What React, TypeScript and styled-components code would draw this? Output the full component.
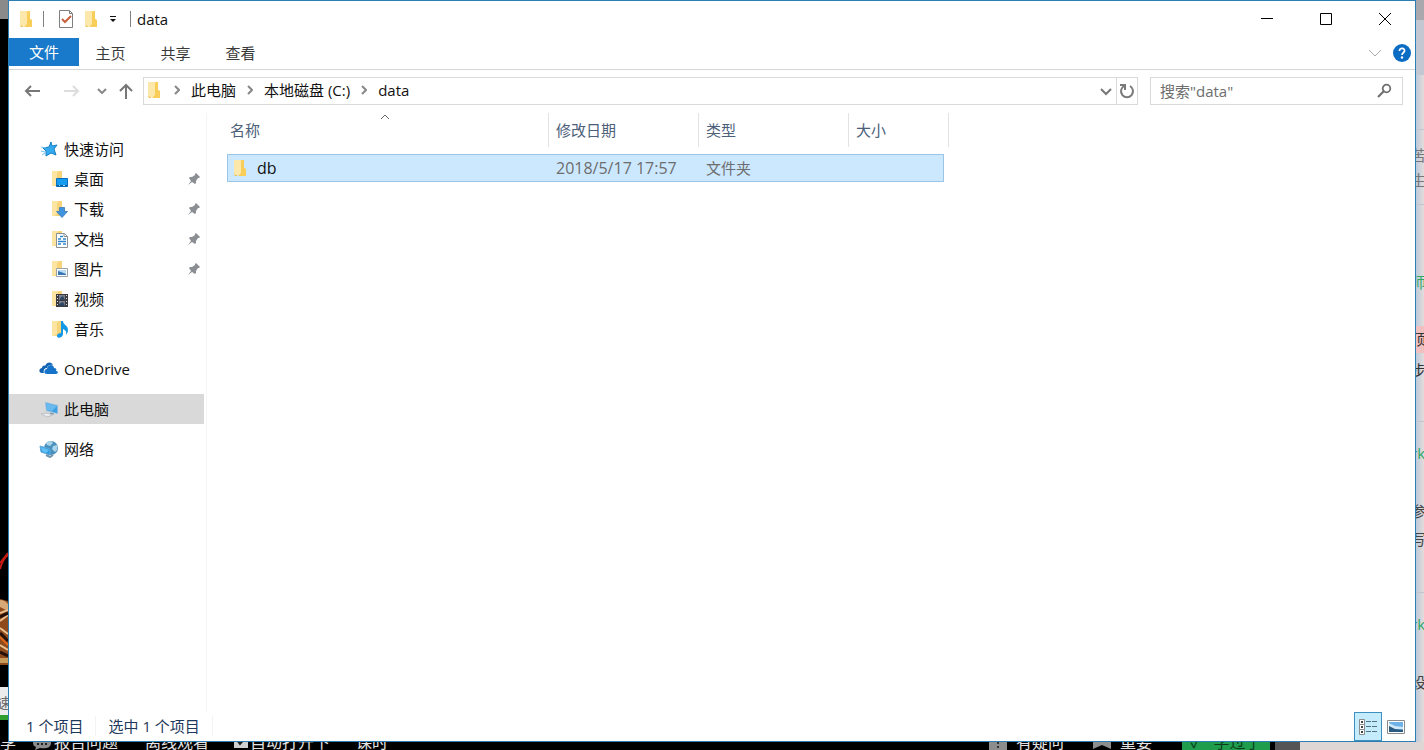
import React from "react";
import styled, { createGlobalStyle } from "styled-components";

const GlobalStyle = createGlobalStyle`
  * { box-sizing: border-box; }
  body {
    margin: 0;
    overflow: hidden;
    font: 15px/20px "Open Sans", "Noto Sans CJK SC", sans-serif;
    color: #111;
  }
  button, input { font: inherit; color: inherit; }
  svg { display: block; flex: none; }
`;

/* ---------- Desktop behind the window ---------- */

const Desktop = styled.div`
  display: grid;
  grid-template: minmax(0, 1fr) 8px / 8px minmax(0, 1fr) 8px;
  height: 100vh;
  min-height: 500px;
  background: #000;
`;

const LeftEdge = styled.div`
  display: flex;
  flex-direction: column;
  overflow: hidden;
`;

const LeftTop = styled.div`
  height: 19px;
  background: #8a8a8a;
`;

const Artwork = styled.div`
  flex: 1;
  display: flex;
  align-items: flex-end;
  padding-bottom: 20px;
`;

const SpeedLabel = styled.div`
  height: 28px;
  background: #ececec;
  color: #666;
  font-size: 14px;
  line-height: 32px;
  text-indent: -3px;
  overflow: hidden;
  white-space: nowrap;
`;

const Progress = styled.div`
  height: 5px;
  margin-bottom: 22px;
  background: #2f9e2f;
`;

const RightEdge = styled.div`
  overflow: hidden;
  background: linear-gradient(90deg, #bccada, #e4dcdb);
`;

const Slice = styled.div<{ $h: number; $color?: string; $bg?: string; $line?: boolean }>`
  height: ${(p) => p.$h}px;
  line-height: ${(p) => p.$h}px;
  color: ${(p) => p.$color || "#777"};
  background: ${(p) => p.$bg || "transparent"};
  border-bottom: ${(p) => (p.$line ? "1px solid #c3c5cc" : "0")};
  font-size: 15px;
  text-indent: -5px;
  white-space: nowrap;
  overflow: hidden;
`;

const BottomEdge = styled.div`
  grid-column: 1 / -1;
  display: flex;
  align-items: flex-end;
  overflow: hidden;
  color: #e4e4e4;
  font-size: 16px;
  line-height: 16px;
  white-space: nowrap;
`;

const BottomItem = styled.span<{ $w: number }>`
  display: flex;
  align-items: flex-end;
  gap: 2px;
  width: ${(p) => p.$w}px;
`;

const Learned = styled.span`
  display: flex;
  align-items: flex-end;
  justify-content: center;
  gap: 12px;
  width: 88px;
  height: 8px;
  background: #1f9d4c;
  color: #0b3d1c;
`;

const Grow = styled.span`
  flex: 1;
`;

const Block = styled.span<{ $w: number; $bg: string }>`
  width: ${(p) => p.$w}px;
  height: 8px;
  background: ${(p) => p.$bg};
`;

/* ---------- Explorer window ---------- */

const Window = styled.main`
  display: flex;
  flex-direction: column;
  min-width: 0;
  background: #fff;
  border: 1px solid #2b7fb5;
`;

const TitleBar = styled.header`
  display: flex;
  align-items: center;
  height: 37px;
  padding: 0 1px 1px 10px;
`;

const QuickTools = styled.div`
  display: flex;
  align-items: center;
`;

const ToolButton = styled.button<{ $w: number }>`
  display: flex;
  align-items: center;
  justify-content: center;
  width: ${(p) => p.$w}px;
  height: 28px;
  padding: 0;
  border: 0;
  background: none;
`;

const Bar = styled.span`
  width: 1px;
  height: 16px;
  margin: 0 8px;
  background: #808080;
`;

const Title = styled.h1`
  flex: 1;
  margin: 0 0 0 -2px;
  font-size: 15px;
  font-weight: 400;
`;

const CaptionButton = styled(ToolButton)`
  height: 36px;
`;

const Ribbon = styled.div`
  display: flex;
  align-items: flex-start;
  height: 32px;
  border-bottom: 1px solid #d5d6d8;
`;

const Tab = styled.button<{ $active?: boolean }>`
  width: ${(p) => (p.$active ? 70 : 65)}px;
  height: ${(p) => (p.$active ? 28 : 30)}px;
  padding: 0 ${(p) => (p.$active ? 0 : 2)}px 0 0;
  border: 0;
  color: ${(p) => (p.$active ? "#fff" : "#3a3a3a")};
  background: ${(p) => (p.$active ? "#1979ca" : "none")};
`;

const RibbonEnd = styled.div`
  display: flex;
  align-items: center;
  height: 30px;
  margin-left: auto;
  padding-right: 2px;
`;

const AddressRow = styled.div`
  display: flex;
  align-items: center;
  height: 43px;
  padding: 0 12px 2px 7px;
`;

const AddressBar = styled.div`
  display: flex;
  align-items: stretch;
  flex: 1;
  min-width: 0;
  height: 28px;
  margin-right: 12px;
  border: 1px solid #d9d9d9;
`;

const Crumbs = styled.nav`
  display: flex;
  align-items: center;
  flex: 1;
  padding: 0 0 2px 3px;
  white-space: nowrap;
`;

const Crumb = styled.a`
  color: #111;
  text-decoration: none;
`;

const Separator = styled.span`
  display: flex;
  justify-content: center;
  width: 28px;
`;

const Refresh = styled(ToolButton)`
  height: auto;
  border-left: 1px solid #d9d9d9;
`;

const SearchBox = styled.label`
  display: flex;
  align-items: center;
  width: 253px;
  height: 28px;
  padding: 0 10px 0 9px;
  border: 1px solid #d9d9d9;
`;

const SearchInput = styled.input`
  flex: 1;
  min-width: 0;
  padding: 0;
  border: 0;
  outline: 0;
  background: none;
  &::placeholder { color: #6d6d6d; opacity: 1; }
`;

const Body = styled.div`
  display: flex;
  flex: 1;
  min-height: 0;
`;

const Sidebar = styled.nav`
  display: flex;
  flex-direction: column;
  gap: 10px;
  width: 198px;
  padding: 21px 2px 0 0;
  border-right: 1px solid #f5f5f5;
`;

const Group = styled.ul`
  margin: 0;
  padding: 0;
  list-style: none;
`;

const NavLink = styled.a<{ $child?: boolean; $selected?: boolean }>`
  display: flex;
  align-items: center;
  gap: 5px;
  height: 30px;
  padding: 0 3px 0 ${(p) => (p.$child ? 42 : 30)}px;
  color: #111;
  background: ${(p) => (p.$selected ? "#d9d9d9" : "none")};
  text-decoration: none;
`;

const NavText = styled.span`
  flex: 1;
`;

const Files = styled.section`
  flex: 1;
  min-width: 0;
  padding-left: 20px;
  overflow: hidden;
`;

const FileTable = styled.table`
  width: 722px;
  table-layout: fixed;
  border-collapse: separate;
  border-spacing: 0;
`;

const NameCol = styled.col`
  width: 322px;
`;

const MidCol = styled.col`
  width: 150px;
`;

const SizeCol = styled.col`
  width: 95px;
`;

const HeadCell = styled.th`
  position: relative;
  height: 34px;
  padding: 0 0 0 7px;
  border-right: 1px solid #e3e3e3;
  color: #4c607a;
  font-weight: 400;
  text-align: left;
  &:first-child { padding-left: 3px; }
`;

const SortMark = styled.span`
  position: absolute;
  top: 1px;
  left: 153px;
`;

const Spacer = styled.td`
  height: 7px;
  padding: 0;
`;

const Cell = styled.td`
  height: 28px;
  padding: 0 0 0 7px;
  border: solid #99c6e8;
  border-width: 1px 0;
  background: #cce8ff;
  color: #6d6d6d;
  &:first-child { padding-left: 5px; border-left-width: 1px; color: #111; }
  &:last-child { border-right-width: 1px; }
`;

const Latin = styled.span`
  font-size: 16px;
`;

const FileName = styled.span`
  display: flex;
  align-items: center;
  gap: 8px;
`;

const StatusBar = styled.footer`
  display: flex;
  align-items: flex-start;
  height: 29px;
  padding: 0 5px 0 17px;
  color: #1e395b;
`;

const StatusText = styled.span`
  margin: 4px 12px 0 0;
  padding-right: 12px;
  border-right: 1px solid #f3f3f3;
`;

const ViewButton = styled.button<{ $on?: boolean }>`
  display: flex;
  align-items: center;
  justify-content: center;
  width: 28px;
  height: 29px;
  padding: 0;
  border: 1px solid ${(p) => (p.$on ? "#3c8fbf" : "transparent")};
  background: ${(p) => (p.$on ? "#c4ecfc" : "none")};
`;

const ViewButtons = styled.div`
  display: flex;
  margin-left: auto;
`;

/* ---------- Icons ---------- */

const Folder = () => (
  <svg width="16" height="18" viewBox="0 0 16 18">
    <path d="M1 1h10v8l2 1v6H1z" fill="#fbdf8c" />
    <path d="M1 1h6l1 3v12H1z" fill="#fde8ab" />
    <path d="M8 4l1-3h2v8l2 1v7H5l3-3z" fill="#f8cd58" />
    <path d="M1 15l4 2H2z" fill="#efbd4d" />
  </svg>
);

const FolderBase = () => (
  <>
    <path d="M1 1h9v15H1z" fill="#fce4a3" />
    <path d="M6 3l2-2h3v15H3l3-2z" fill="#f7d47a" />
  </>
);

const Desk = () => (
  <svg width="18" height="18" viewBox="0 0 18 18">
    <FolderBase />
    <path d="M5.500 8.500h11v8h-11z" fill="#149cf0" stroke="#0d6dbd" />
    <path d="M6 15.500h10" stroke="#075a9c" />
    <path d="M8 15.500h1M12 15.500h2" stroke="#9edbff" />
  </svg>
);

const Download = () => (
  <svg width="18" height="18" viewBox="0 0 18 18">
    <FolderBase />
    <path d="M8.500 7.500h5v4h3l-5.500 6-5.500-6h3z" fill="#3f94e0" stroke="#4b86bd" />
  </svg>
);

const Documents = () => (
  <svg width="18" height="18" viewBox="0 0 18 18">
    <FolderBase />
    <path d="M5.500 3.500h8l3 3v11h-11z" fill="#fff" stroke="#8a8f96" />
    <path d="M13 3.500v3h3.500" fill="none" stroke="#8a8f96" />
    <path d="M9 6.500h3M7 9h3M12 9h3M7 11.500h8M7 14h3M12 14h3" stroke="#2f86cc" strokeWidth="1.400" />
  </svg>
);

const Pictures = () => (
  <svg width="18" height="18" viewBox="0 0 18 18">
    <FolderBase />
    <path d="M5.500 8.500h11v8h-11z" fill="#fff" stroke="#9aa1a8" />
    <path d="M7 10h8v5H7z" fill="#b9dcf6" />
    <path d="M7 11l3 1 5 2v1H7z" fill="#3878b4" />
  </svg>
);

const Videos = () => (
  <svg width="18" height="18" viewBox="0 0 18 18">
    <FolderBase />
    <path d="M5 4h12v13H5z" fill="#3b3b40" />
    <path d="M8 5h6v5H8zM8 11h6v5H8z" fill="#78808f" />
    <path d="M9 8l3-2 2 4H9zM8 14l4-2 2 4H8z" fill="#2e4561" />
    <path d="M6.500 5v12M15.500 5v12" stroke="#ddd" strokeDasharray="1 2" />
  </svg>
);

const Music = () => (
  <svg width="18" height="18" viewBox="0 0 18 18">
    <FolderBase />
    <path d="M10 1h2c0 4 5 4 5 9 0 2-1 4-2 5 1-4-1-5-3-6v5c0 4-6 5-6 2 0-2 2-3 4-3z" fill="#1599e5" />
  </svg>
);

const Star = () => (
  <svg width="20" height="18" viewBox="0 0 20 18">
    <path d="M12 2l1 4 5-1-3 4 2 6-5-2-5 3v-5L4 8l6-1z" fill="#34a9ee" stroke="#1680c4" />
    <path d="M2 7l5 1M2 11l4 1M3 15l3-2" stroke="#6fc3f3" />
  </svg>
);

const Cloud = () => (
  <svg width="20" height="16" viewBox="0 0 20 16">
    <path d="M3 12c-4 0-3-5 0-5 0-2 2-3 3-2 2-5 7-4 8-1-3-1-6 1-6 3-3 0-4 3-3 5z" fill="#1264b3" />
    <path d="M8 13c-4 0-3-5 0-5 0-5 7-5 7-1 2 0 3 1 2 3 3 0 2 3 0 3z" fill="#1673c9" />
  </svg>
);

const Computer = () => (
  <svg width="20" height="18" viewBox="0 0 20 18">
    <path d="M6 2l13 3v9L7 11z" fill="#8cbce0" />
    <path d="M7 3l11 3v7L8 10z" fill="#3ba0e4" />
    <path d="M7 3l11 3-5 5-5-1z" fill="#6ab9ee" />
    <path d="M2 14l6-1 6 2-6 2z" fill="#e9ecee" stroke="#bcc1c5" />
    <path d="M11 13l4 1" stroke="#6e8ea7" />
  </svg>
);

const Network = () => (
  <svg width="20" height="18" viewBox="0 0 20 18">
    <circle cx="12" cy="8" r="7" fill="#4a90bd" />
    <path d="M7 3c3-3 6-2 7 0l-3 3-3-1zM14 6l4-1c1 3 0 6-2 7l-3-3z" fill="#a9d4ea" />
    <path d="M1 6l10 3v6L2 12z" fill="#2b9be2" stroke="#5fa8d6" />
    <path d="M2 7l8 3-3 3-4-2z" fill="#64bff2" />
    <path d="M7 15l4 2 3-2" fill="none" stroke="#7295ab" strokeWidth="2" />
  </svg>
);

const Pin = () => (
  <svg width="14" height="14" viewBox="0 0 14 14">
    <path d="M9 1l4 4-1 1h-1L9 9v2l-1 1-3-2-4 3 3-4-2-3 1-1h2l3-2V2z" fill="#8b8f93" />
  </svg>
);

const Checklist = () => (
  <svg width="16" height="18" viewBox="0 0 16 18">
    <path d="M1.500.5h10l3 3v14h-13z" fill="#fff" stroke="#7f7f7f" />
    <path d="M11.500.5v3h3" fill="none" stroke="#7f7f7f" />
    <path d="M4 9l3 3 6-6" fill="none" stroke="#c9603c" strokeWidth="2" />
  </svg>
);

const Customize = () => (
  <svg width="8" height="8" viewBox="0 0 8 8">
    <path d="M1 1.500h6" stroke="#111" />
    <path d="M1 4h6L4 7z" fill="#111" />
  </svg>
);

const Stroke = ({ d, w, h, color = "#666", width = 2 }: { d: string; w: number; h: number; color?: string; width?: number }) => (
  <svg width={w} height={h} viewBox={`0 0 ${w} ${h}`}>
    <path d={d} fill="none" stroke={color} strokeWidth={width} />
  </svg>
);

const Chevron = () => <Stroke w={6} h={10} d="M1 1l4 4-4 4" color="#888" />;

const RefreshIcon = () => (
  <svg width="16" height="16" viewBox="0 0 16 16">
    <path d="M11 3a6 6 0 1 1-6 0" fill="none" stroke="#7a7a7a" strokeWidth="2" />
    <path d="M1 2h5v5" fill="none" stroke="#7a7a7a" strokeWidth="2" />
  </svg>
);

const SearchIcon = () => (
  <svg width="15" height="15" viewBox="0 0 15 15">
    <circle cx="9.500" cy="5.500" r="3.800" fill="none" stroke="#707070" strokeWidth="1.800" />
    <path d="M7 8l-6 6" stroke="#707070" strokeWidth="2.200" />
  </svg>
);

const Help = () => (
  <svg width="20" height="20" viewBox="0 0 20 20">
    <circle cx="10" cy="10" r="9" fill="#0b6cc4" />
    <path d="M7.500 8c0-4 5.500-3 5 0-.3 1.500-2.500 2-2.500 4" fill="none" stroke="#fff" strokeWidth="1.800" />
    <circle cx="10" cy="14.500" r="1.200" fill="#fff" />
  </svg>
);

const DetailsIcon = () => (
  <svg width="20" height="18" viewBox="0 0 20 18">
    {[1, 6, 11].map((y) => (
      <g key={y}>
        <path d={`M1.500 ${y}.5h5v5h-5z`} fill="#fff" stroke="#8a8a8a" />
        <path d={`M3 ${y + 2}h2v2H3z`} fill="#444" />
        <path d={`M8 ${y + 2}.5h5M14 ${y + 2}.5h5`} stroke="#55717f" />
      </g>
    ))}
  </svg>
);

const LargeIcon = () => (
  <svg width="18" height="14" viewBox="0 0 18 14">
    <path d="M.5.5h17v13H.5z" fill="#fff" stroke="#8a8a8a" />
    <path d="M2 2h14v10H2z" fill="#6db1e6" />
    <path d="M2 3l6 3 8 1v2H2z" fill="#cfe7f6" />
    <path d="M2 6l6 3 8 1v2H2z" fill="#2a5a80" />
  </svg>
);

const Books = () => (
  <svg width="8" height="116" viewBox="0 0 8 116">
    <path d="M0 18C2 10 5 6 8 4M0 12L8 2" fill="none" stroke="#c61b12" strokeWidth="2" />
    <path d="M0 48l8 2v64H0z" fill="#8f4a1c" />
    <path d="M0 49c4 0 6 2 8 4v7L0 56z" fill="#d9a877" />
    <path d="M0 62l8-3M0 70l8-6M0 77l8 6M0 94l8 5" stroke="#eac08c" strokeWidth="2" />
    <path d="M0 66l8-4M0 82l8 8M0 101l8 4" stroke="#241008" strokeWidth="3" />
    <path d="M0 86l8 8" stroke="#e0661a" strokeWidth="2" />
    <path d="M0 107h8v5H0z" fill="#c89a5b" />
  </svg>
);

const Bubble = () => (
  <svg width="20" height="14" viewBox="0 0 20 14">
    <path d="M1 7c0-8 18-8 18 0 0 5-6 6-11 5l-5 2 1-3C2 10 1 9 1 7z" fill="#8c8c8c" />
    <path d="M5 8h2M9 8h2M13 8h2" stroke="#222" strokeWidth="2" />
  </svg>
);

const Tick = () => (
  <svg width="14" height="14" viewBox="0 0 14 14">
    <path d="M0 0h14v12H0z" fill="#d0d0d0" />
    <path d="M3 4l3 4 6-7" fill="none" stroke="#222" strokeWidth="2" />
  </svg>
);

const Mark = ({ notch }: { notch?: boolean }) => (
  <svg width="18" height="10" viewBox="0 0 18 10">
    <path d={notch ? "M0 0h18v9l-9-4-9 4z" : "M0 0h18v10H0z"} fill="#8d8d8d" />
    {!notch && <path d="M9 1v3M9 6v2" stroke="#333" strokeWidth="2" />}
  </svg>
);

/* ---------- Content ---------- */

const quickLinks = [
  { text: "桌面", icon: <Desk />, pinned: true },
  { text: "下载", icon: <Download />, pinned: true },
  { text: "文档", icon: <Documents />, pinned: true },
  { text: "图片", icon: <Pictures />, pinned: true },
  { text: "视频", icon: <Videos />, pinned: false },
  { text: "音乐", icon: <Music />, pinned: false },
];

const roots = [
  { text: "OneDrive", icon: <Cloud />, selected: false },
  { text: "此电脑", icon: <Computer />, selected: true },
  { text: "网络", icon: <Network />, selected: false },
];

const slices: { h: number; text?: string; color?: string; bg?: string; line?: boolean }[] = [
  { h: 20, bg: "#a9a9ad" },
  { h: 55, bg: "#c3c7d2" },
  { h: 55, line: true },
  { h: 13 },
  { h: 25, text: "苦" },
  { h: 25, text: "生" },
  { h: 12, line: true },
  { h: 64 },
  { h: 26, text: "师", color: "#2fa866" },
  { h: 31 },
  { h: 27, text: "顶", color: "#333", bg: "#f0bfc0" },
  { h: 4 },
  { h: 26, text: "步", color: "#333" },
  { h: 39, line: true },
  { h: 18 },
  { h: 26, text: "rk", color: "#2fa866" },
  { h: 31 },
  { h: 28, text: "参", color: "#444" },
  { h: 28, text: "写", color: "#444" },
  { h: 40, line: true },
  { h: 17 },
  { h: 28, text: "rk", color: "#2fa866" },
  { h: 31 },
  { h: 26, text: "设", color: "#444" },
];

export default function App() {
  return (
    <>
      <GlobalStyle />
      <Desktop>
        <LeftEdge>
          <LeftTop />
          <Artwork><Books /></Artwork>
          <SpeedLabel>速</SpeedLabel>
          <Progress />
        </LeftEdge>

        <Window>
          <TitleBar>
            <QuickTools>
              <Folder />
              <Bar />
              <ToolButton $w={28} aria-label="属性"><Checklist /></ToolButton>
              <ToolButton $w={24} aria-label="新建文件夹"><Folder /></ToolButton>
              <ToolButton $w={18} aria-label="自定义"><Customize /></ToolButton>
            </QuickTools>
            <Bar />
            <Title>data</Title>
            <CaptionButton $w={59} aria-label="最小化"><Stroke w={12} h={12} d="M0 5.500h12" color="#000" width={1} /></CaptionButton>
            <CaptionButton $w={59} aria-label="最大化"><Stroke w={12} h={12} d="M.5.5h11v11H.5z" color="#000" width={1} /></CaptionButton>
            <CaptionButton $w={59} aria-label="关闭"><Stroke w={12} h={12} d="M0 0l12 12M12 0L0 12" color="#000" width={1} /></CaptionButton>
          </TitleBar>

          <Ribbon>
            <Tab $active>文件</Tab>
            <Tab>主页</Tab>
            <Tab>共享</Tab>
            <Tab>查看</Tab>
            <RibbonEnd>
              <ToolButton $w={32} aria-label="展开功能区"><Stroke w={14} h={8} d="M1 1l6 6 6-6" color="#aaa" width={1} /></ToolButton>
              <ToolButton $w={22} aria-label="帮助"><Help /></ToolButton>
            </RibbonEnd>
          </Ribbon>

          <AddressRow>
            <ToolButton $w={32} aria-label="后退"><Stroke w={16} h={12} d="M16 6H2M7 1L2 6l5 5" color="#777" /></ToolButton>
            <ToolButton $w={47} aria-label="前进"><Stroke w={16} h={12} d="M0 6h14M9 1l5 5-5 5" color="#ddd" /></ToolButton>
            <ToolButton $w={14} aria-label="最近位置"><Stroke w={10} h={6} d="M1 1l4 4 4-4" color="#888" /></ToolButton>
            <ToolButton $w={34} aria-label="上移"><Stroke w={14} h={16} d="M7 16V2M1 8l6-6 6 6" color="#777" /></ToolButton>
            <AddressBar>
              <Crumbs>
                <Folder />
                <Separator><Chevron /></Separator>
                <Crumb href="#pc">此电脑</Crumb>
                <Separator><Chevron /></Separator>
                <Crumb href="#c">本地磁盘 (C:)</Crumb>
                <Separator><Chevron /></Separator>
                <Crumb href="#data">data</Crumb>
              </Crumbs>
              <ToolButton $w={20} aria-label="历史记录"><Stroke w={12} h={8} d="M1 1l5 5 5-5" color="#777" /></ToolButton>
              <Refresh $w={21} aria-label="刷新"><RefreshIcon /></Refresh>
            </AddressBar>
            <SearchBox>
              <SearchInput type="text" placeholder={'搜索"data"'} aria-label="搜索" />
              <SearchIcon />
            </SearchBox>
          </AddressRow>

          <Body>
            <Sidebar>
              <Group>
                <li>
                  <NavLink href="#quick"><Star /><NavText>快速访问</NavText></NavLink>
                </li>
                {quickLinks.map((c) => (
                  <li key={c.text}>
                    <NavLink href="#quick" $child>
                      {c.icon}
                      <NavText>{c.text}</NavText>
                      {c.pinned && <Pin />}
                    </NavLink>
                  </li>
                ))}
              </Group>
              {roots.map((r) => (
                <NavLink key={r.text} href="#root" $selected={r.selected}>
                  {r.icon}
                  <NavText>{r.text}</NavText>
                </NavLink>
              ))}
            </Sidebar>

            <Files>
              <FileTable>
                <colgroup>
                  <NameCol />
                  <MidCol />
                  <MidCol />
                  <SizeCol />
                  <col />
                </colgroup>
                <thead>
                  <tr>
                    <HeadCell>
                      名称
                      <SortMark><Stroke w={10} h={6} d="M1 5l4-4 4 4" color="#666" width={1} /></SortMark>
                    </HeadCell>
                    <HeadCell>修改日期</HeadCell>
                    <HeadCell>类型</HeadCell>
                    <HeadCell colSpan={2}>大小</HeadCell>
                  </tr>
                </thead>
                <tbody>
                  <tr><Spacer colSpan={5} /></tr>
                  <tr>
                    <Cell><FileName><Folder /><Latin>db</Latin></FileName></Cell>
                    <Cell><Latin>2018/5/17 17:57</Latin></Cell>
                    <Cell>文件夹</Cell>
                    <Cell />
                  </tr>
                </tbody>
              </FileTable>
            </Files>
          </Body>

          <StatusBar>
            <StatusText>1 个项目</StatusText>
            <StatusText>选中 1 个项目</StatusText>
            <ViewButtons>
              <ViewButton $on aria-label="详细信息"><DetailsIcon /></ViewButton>
              <ViewButton aria-label="大图标"><LargeIcon /></ViewButton>
            </ViewButtons>
          </StatusBar>
        </Window>

        <RightEdge>
          {slices.map((s, i) => (
            <Slice key={i} $h={s.h} $color={s.color} $bg={s.bg} $line={s.line}>{s.text}</Slice>
          ))}
        </RightEdge>

        <BottomEdge>
          <BottomItem $w={32}><span>享</span></BottomItem>
          <BottomItem $w={113}><Bubble />报告问题</BottomItem>
          <BottomItem $w={89}>离线观看</BottomItem>
          <BottomItem $w={122}><Tick />自动打开下</BottomItem>
          <BottomItem $w={60}>课时</BottomItem>
          <Grow />
          <BottomItem $w={27}><Mark /></BottomItem>
          <BottomItem $w={77}>有疑问</BottomItem>
          <BottomItem $w={27}><Mark notch /></BottomItem>
          <BottomItem $w={62}>重要</BottomItem>
          <Learned><span>✓</span><span>学过了</span></Learned>
          <Block $w={5} $bg="#000" />
          <Block $w={25} $bg="#555" />
          <Block $w={124} $bg="#ddd6d4" />
        </BottomEdge>
      </Desktop>
    </>
  );
}
